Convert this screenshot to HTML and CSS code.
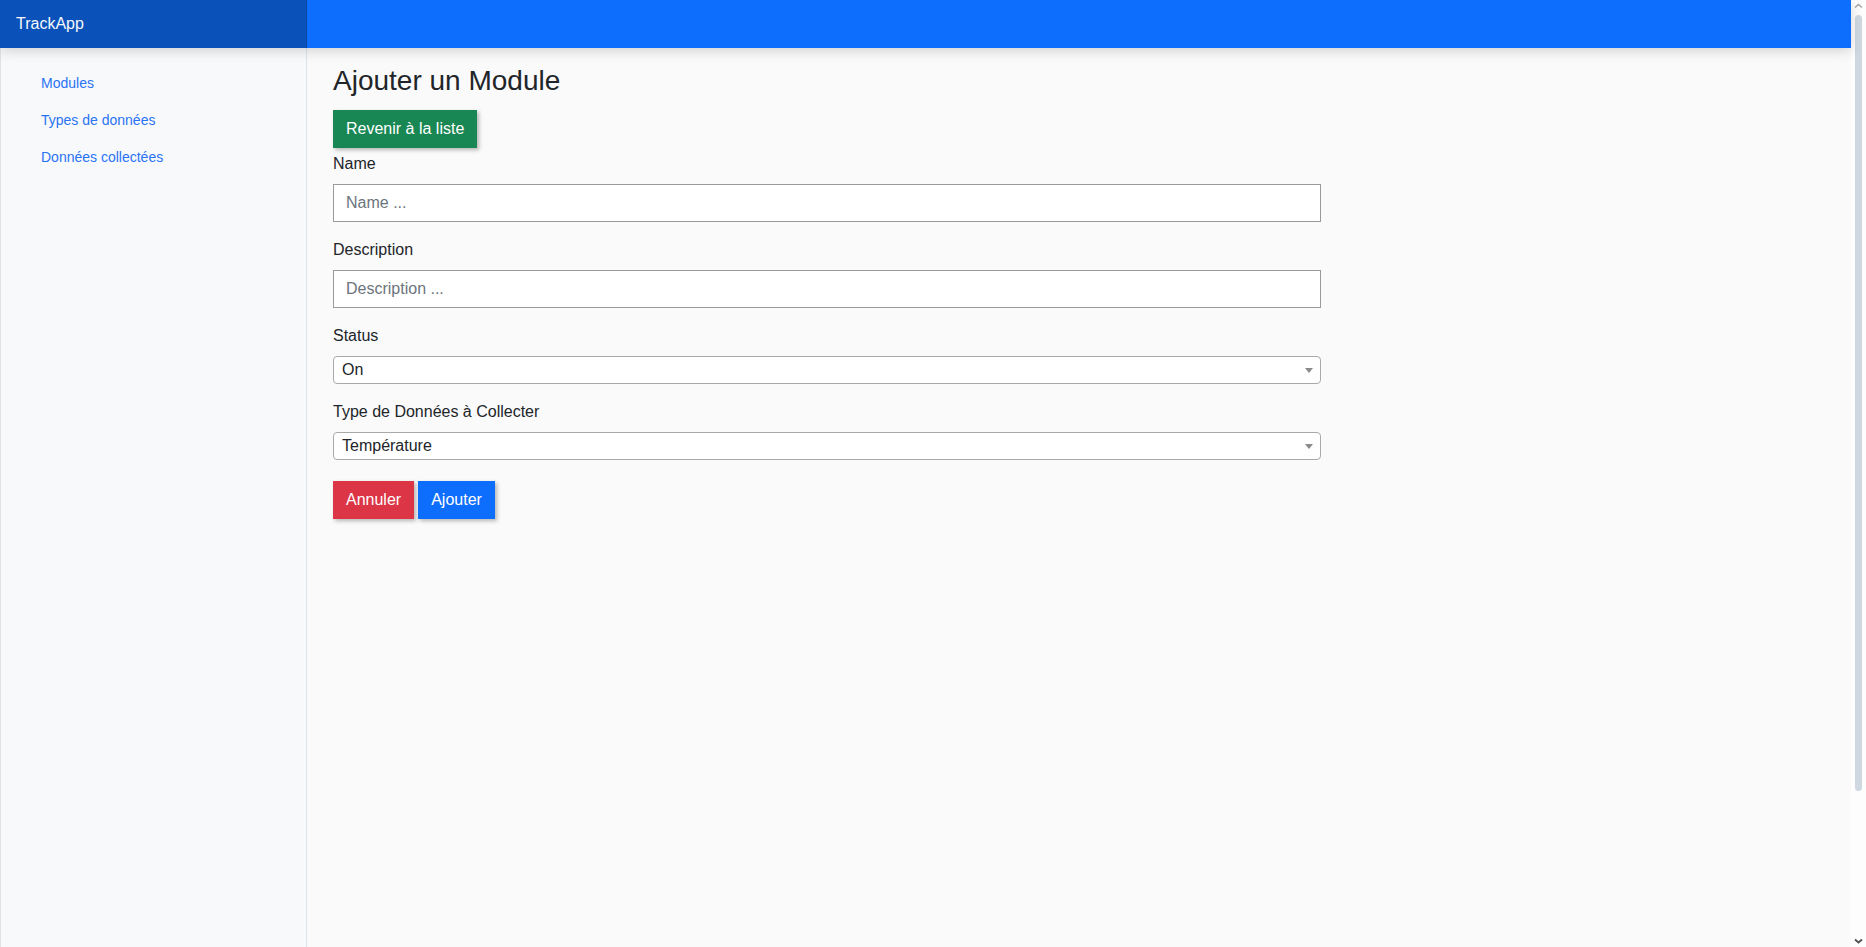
FILE: index.html
```html
<!DOCTYPE html>
<html lang="fr">
<head>
<meta charset="utf-8">
<title>TrackApp - Ajouter un Module</title>
<link rel="stylesheet" href="styles.css">
</head>
<body>
<div class="app">
  <header class="topbar">
    <div class="brand">TrackApp</div>
    <div class="topbar-fill"></div>
  </header>
  <div class="layout">
    <aside class="sidebar">
      <nav class="side-nav">
        <a href="#" class="side-link">Modules</a>
        <a href="#" class="side-link">Types de données</a>
        <a href="#" class="side-link">Données collectées</a>
      </nav>
    </aside>
    <main class="content">
      <h3 class="page-title">Ajouter un Module</h3>
      <button class="btn btn-green" type="button">Revenir à la liste</button>
      <form class="form">
        <div class="field">
          <label class="field-label" for="name">Name</label>
          <input class="text-input" id="name" type="text" placeholder="Name ...">
        </div>
        <div class="field">
          <label class="field-label" for="desc">Description</label>
          <input class="text-input" id="desc" type="text" placeholder="Description ...">
        </div>
        <div class="field">
          <label class="field-label" for="status">Status</label>
          <div class="select-wrap">
            <select class="select-input" id="status">
              <option>On</option>
              <option>Off</option>
            </select>
          </div>
        </div>
        <div class="field">
          <label class="field-label" for="type">Type de Données à Collecter</label>
          <div class="select-wrap">
            <select class="select-input" id="type">
              <option>Température</option>
              <option>Humidité</option>
            </select>
          </div>
        </div>
        <div class="actions">
          <button class="btn btn-red" type="button">Annuler</button>
          <button class="btn btn-blue" type="submit">Ajouter</button>
        </div>
      </form>
    </main>
  </div>
</div>
<div class="scrollbar" aria-hidden="true">
  <svg class="sb-arrow" width="15" height="12" viewBox="0 0 15 12">
    <path d="M4 7.5 L7.5 4.5 L11 7.5" fill="none" stroke="#a8a8a8" stroke-width="1.6"/>
  </svg>
  <div class="sb-track">
    <div class="sb-thumb"></div>
  </div>
  <svg class="sb-arrow" width="15" height="12" viewBox="0 0 15 12">
    <path d="M4 4.5 L7.5 7.5 L11 4.5" fill="none" stroke="#505050" stroke-width="1.8"/>
  </svg>
</div>
</body>
</html>
```
FILE: styles.css
```css
html, body {
  height: 100%;
}

body {
  margin: 0;
  background: #fafafa;
  font-family: "Liberation Sans", Arial, sans-serif;
  color: #212529;
  display: flex;
  overflow: hidden;
}

.app {
  flex: 1;
  min-width: 0;
  height: 100vh;
  display: flex;
  flex-direction: column;
}

.topbar {
  display: flex;
  height: 48px;
  flex: none;
  position: relative;
  z-index: 2;
  box-shadow: 0 3px 12px rgba(0, 0, 0, 0.16);
}

.brand {
  width: 307px;
  box-sizing: border-box;
  padding-left: 16px;
  background: #0a52ba;
  border-right: 1px solid #0a47a0;
  color: #f5f7fb;
  font-size: 16px;
  line-height: 48px;
}

.topbar-fill {
  flex: 1;
  background: #0d6efd;
}

.layout {
  flex: 1;
  display: flex;
}

.sidebar {
  width: 307px;
  flex: none;
  box-sizing: border-box;
  background: #f8f9fa;
  border-left: 1px solid #dfe3e7;
  border-right: 1px solid #dfe3e7;
  padding: 17px 0 0 40px;
}

.side-nav {
  display: flex;
  flex-direction: column;
}

.side-link {
  display: block;
  height: 37px;
  line-height: 37px;
  font-size: 14px;
  color: #2a73f5;
  text-decoration: none;
}

.content {
  flex: 1;
  padding: 16px 26px;
}

.page-title {
  margin: 0 0 12px;
  font-size: 28px;
  font-weight: 400;
  line-height: 1.2;
  color: #212529;
}

.btn {
  display: inline-block;
  height: 38px;
  padding: 0 13px;
  border: none;
  border-radius: 0;
  color: #fff;
  font-family: "Liberation Sans", Arial, sans-serif;
  font-size: 16px;
  line-height: 38px;
  box-shadow: 2px 2px 4px rgba(0, 0, 0, 0.28);
  cursor: pointer;
}

.btn-green {
  background: #198754;
}

.btn-red {
  background: #dc3545;
}

.btn-blue {
  background: #0d6efd;
}

.form {
  width: 988px;
  margin-top: 4px;
}

.field {
  margin-bottom: 16px;
}

.field-label {
  display: block;
  font-size: 16px;
  line-height: 24px;
  margin-bottom: 8px;
  color: #212529;
}

.text-input {
  display: block;
  width: 100%;
  height: 38px;
  box-sizing: border-box;
  padding: 0 12px;
  border: 1px solid #9a9a9a;
  border-radius: 0;
  background: #fff;
  font-family: "Liberation Sans", Arial, sans-serif;
  font-size: 16px;
  color: #212529;
  outline: none;
}

.text-input::placeholder {
  color: #6c757d;
}

.select-wrap {
  position: relative;
}

.select-wrap::after {
  content: "";
  position: absolute;
  right: 8px;
  top: 12px;
  border-left: 4px solid transparent;
  border-right: 4px solid transparent;
  border-top: 5px solid #8a8a8a;
  pointer-events: none;
}

.select-input {
  display: block;
  width: 100%;
  height: 28px;
  box-sizing: border-box;
  padding: 0 8px;
  border: 1px solid #a9a9a9;
  border-radius: 4px;
  background: #fff;
  appearance: none;
  -webkit-appearance: none;
  font-family: "Liberation Sans", Arial, sans-serif;
  font-size: 16px;
  color: #212529;
  outline: none;
}

.actions {
  margin-top: 21px;
  display: flex;
  gap: 4px;
}

.scrollbar {
  width: 15px;
  flex: none;
  height: 100vh;
  background: #fdfdfd;
  display: flex;
  flex-direction: column;
}

.sb-arrow {
  display: block;
  flex: none;
}

.sb-track {
  flex: 1;
  display: flex;
  flex-direction: column;
  padding-top: 3px;
}

.sb-thumb {
  width: 7px;
  height: 776px;
  margin-left: 4px;
  border-radius: 4px;
  background: #cfd8e1;
}
```
